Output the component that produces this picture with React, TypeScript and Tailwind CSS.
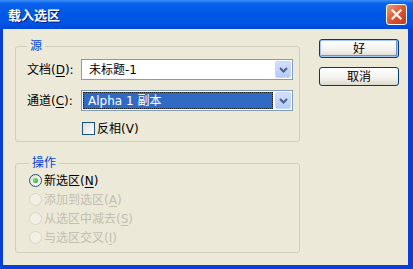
import React from "react"

const font = "font-['DejaVu_Sans','Noto_Sans_CJK_SC',sans-serif] text-[12px]"

function Chevron() {
  return (
    <svg width="9" height="6" viewBox="0 0 9 6">
      <path d="M1 1 L4.5 4.5 L8 1" fill="none" stroke="#4D6185" strokeWidth="2" />
    </svg>
  )
}

function Combo({ value, selected }: { value: string; selected?: boolean }) {
  return (
    <div className="flex h-[21px] w-[212px] items-stretch border border-[#7F9DB9] bg-white p-[1px]">
      {selected ? (
        <div className="mr-[2px] flex flex-1 items-center border border-dotted border-[#1A1A1A] bg-[#316AC5] pl-[4px] text-white">
          {value}
        </div>
      ) : (
        <div className="flex flex-1 items-center pl-[6px] text-black">{value}</div>
      )}
      <div className="flex w-[16px] items-center justify-center rounded-[2px] border border-[#C8D6F8] bg-[linear-gradient(to_bottom,#D3DFFD,#B6CBFA)]">
        <Chevron />
      </div>
    </div>
  )
}

function Key({ children }: { children: string }) {
  return <span className="underline underline-offset-2">{children}</span>
}

function Radio({ label, k, checked, disabled }: { label: string; k: string; checked?: boolean; disabled?: boolean }) {
  return (
    <div className="flex h-[19px] items-center gap-[2px]">
      <span
        className={
          disabled
            ? "flex h-[13px] w-[13px] items-center justify-center rounded-full border border-[#D8D5C8] bg-[#F1EFE6]"
            : "flex h-[13px] w-[13px] items-center justify-center rounded-full border border-[#1C5180] bg-[linear-gradient(135deg,#DCDCD7,#FFFFFF)]"
        }
      >
        {checked && <span className="h-[5px] w-[5px] rounded-full bg-[radial-gradient(circle_at_35%_35%,#7BE07B,#21A121)]" />}
      </span>
      <span className={disabled ? "text-[#C2BFB2]" : "text-black"}>
        {label}(<Key>{k}</Key>)
      </span>
    </div>
  )
}

function Button({ children, primary }: { children: string; primary?: boolean }) {
  return (
    <button
      className={
        "flex h-[19px] w-[80px] items-center justify-center rounded-[3px] border border-[#003C74] bg-[linear-gradient(to_bottom,#FFFFFF,#F2F1EC_60%,#DCD8CC)] text-black " +
        (primary ? "shadow-[inset_0_0_0_1px_#A8C4F0,inset_-1px_-1px_0_1px_#6C8FE0]" : "")
      }
    >
      {children}
    </button>
  )
}

export default function App() {
  return (
    <div className={`flex h-[269px] w-[413px] flex-col ${font}`}>
      <div className="flex h-[29px] items-center justify-between bg-[linear-gradient(to_bottom,#3D8EF5_0%,#0A62EC_12%,#0058E6_45%,#0055E5_80%,#0047D8_100%)] pl-[8px] pr-[6px]">
        <span className="font-['Noto_Sans_CJK_SC',sans-serif] text-[13px] font-bold text-white [text-shadow:1px_1px_#0A1883]">
          载入选区
        </span>
        <div className="flex h-[21px] w-[21px] items-center justify-center rounded-[3px] border border-white bg-[linear-gradient(135deg,#EC9A7C,#D9532F_55%,#C0391F)]">
          <svg width="11" height="11" viewBox="0 0 11 11">
            <path d="M1.5 1.5 L9.5 9.5 M9.5 1.5 L1.5 9.5" stroke="#FFFFFF" strokeWidth="2.2" strokeLinecap="square" />
          </svg>
        </div>
      </div>

      <div className="flex flex-1 border-x-[3px] border-r-[5px] border-b-[4px] border-[#0A3ED8] bg-[#ECE9D8] pl-[12px] pt-[9px]">
        <div className="flex w-[285px] flex-col">
          <fieldset className="rounded-[3px] border border-[#D0D0BF] pb-[6px] pl-[11px] pr-[6px]">
            <legend className="px-[3px] leading-4 text-[#0046D5]">源</legend>
            <div className="mt-[5px] flex h-[21px] items-center">
              <span className="w-[54px]">
                文档(<Key>D</Key>):
              </span>
              <Combo value="未标题-1" />
            </div>
            <div className="mt-[10px] flex h-[21px] items-center">
              <span className="w-[54px]">
                通道(<Key>C</Key>):
              </span>
              <Combo value="Alpha 1 副本" selected />
            </div>
            <div className="ml-[55px] mt-[11px] flex h-[13px] items-center gap-[2px]">
              <span className="h-[13px] w-[13px] border border-[#1C5180] bg-[linear-gradient(135deg,#DCDCD7,#FFFFFF)]" />
              <span>反相(V)</span>
            </div>
          </fieldset>

          <fieldset className="mt-[13px] rounded-[3px] border border-[#D0D0BF] pb-[5px] pl-[13px]">
            <legend className="px-[3px] leading-4 text-[#0046D5]">操作</legend>
            <Radio label="新选区" k="N" checked />
            <Radio label="添加到选区" k="A" disabled />
            <Radio label="从选区中减去" k="S" disabled />
            <Radio label="与选区交叉" k="I" disabled />
          </fieldset>
        </div>

        <div className="ml-[19px] mt-[1px] flex w-[80px] flex-col gap-[9px]">
          <Button primary>好</Button>
          <Button>取消</Button>
        </div>
      </div>
    </div>
  )
}
